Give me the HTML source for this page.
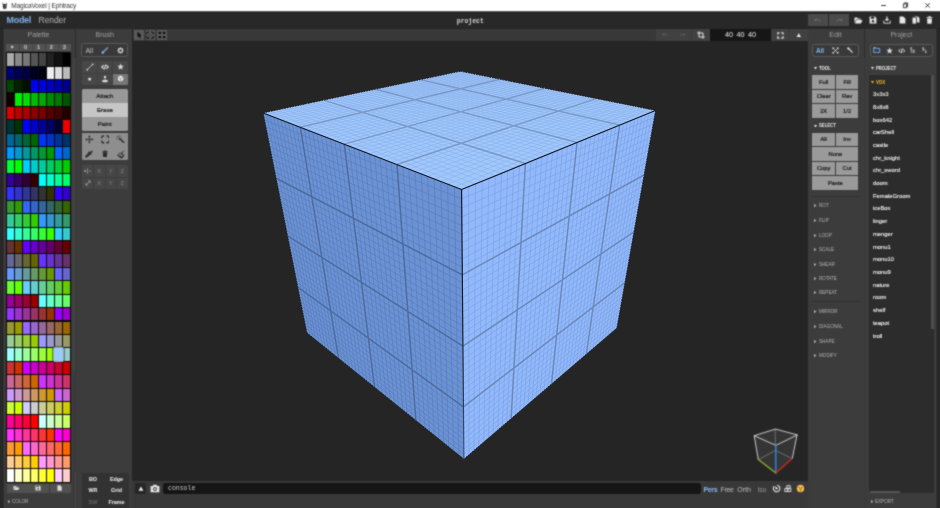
<!DOCTYPE html>
<html><head><meta charset="utf-8"><title>MagicaVoxel | Ephtracy</title>
<style>
*{box-sizing:border-box;margin:0;padding:0}
html,body{width:940px;height:508px;overflow:hidden;background:#282828}
body{position:relative;font-family:"Liberation Sans",sans-serif;font-size:7px;color:#ccc;line-height:1}
.a{position:absolute}
.t{position:absolute;white-space:nowrap;transform:translate(-50%,-50%)}
.l{position:absolute;white-space:nowrap;transform:translate(0,-50%)}
.panel{position:absolute;background:#3c3c3c}
.btn{position:absolute;background:#9a9a9a;color:#161616;-webkit-text-stroke:0.2px #161616;font-size:5.75px;text-align:center}
.btn span{position:absolute;left:50%;top:57%;transform:translate(-50%,-50%);white-space:nowrap}
.sec{position:absolute;margin-top:0.9px;font-size:5.6px;color:#c4c4c4;white-space:nowrap;transform:translate(0,-50%);display:flex;align-items:center;height:8px}
.sec i{font-style:normal;display:block;width:4.2px;height:3px}
.sec i.d{width:0;height:0;border-left:1.5px solid transparent;border-right:1.5px solid transparent;border-top:2.4px solid currentColor;margin-right:1.6px;margin-left:-0.4px;margin-top:-0.6px}
.sec i.r{width:0;height:0;border-top:1.5px solid transparent;border-bottom:1.5px solid transparent;border-left:2.5px solid currentColor;margin-right:1.7px;margin-top:-0.6px}
.sec b{display:block;font-weight:normal;transform:scaleX(0.82);transform-origin:left center}
.sec.o{color:#ececec}
.sec.o b{font-weight:bold;transform:scaleX(0.76)}
.item{position:absolute;left:873px;font-size:5.85px;color:#f4f4f4;-webkit-text-stroke:0.1px #f4f4f4;margin-top:0.9px;white-space:nowrap;transform:translate(0,-50%)}
.mono{font-family:"Liberation Mono",monospace}
#w{position:absolute;left:0;top:0;width:940px;height:508px;overflow:hidden;will-change:transform;filter:url(#cv)}
</style></head><body><svg width="0" height="0" style="position:absolute"><filter id="cv" x="0" y="0" width="100%" height="100%" color-interpolation-filters="sRGB"><feConvolveMatrix order="3" kernelMatrix="1 2 1 2 8 2 1 2 1" divisor="20" edgeMode="duplicate" preserveAlpha="true"/></filter></svg><div id="w">
<!-- title bar -->
<div class="a" style="left:0;top:0;width:940px;height:11px;background:#fff"></div>
<svg class="a" style="left:2.2px;top:1.6px" width="5.4" height="7.4" viewBox="0 0 7 9"><path d="M0.6,0.3 L2,2.2 L5,2.2 L6.4,0.3 L6,4 L5.6,8.6 L1.4,8.6 L1,4 Z" fill="#2a2233"/><rect x="2" y="3.6" width="1" height="1.2" fill="#b58ad8"/><rect x="4" y="3.6" width="1" height="1.2" fill="#b58ad8"/><rect x="2.2" y="6" width="2.6" height="1.6" fill="#5b4a78"/></svg>
<div class="l" style="left:11.3px;top:6.3px;font-size:6.5px;color:#333;letter-spacing:-0.14px">MagicaVoxel | Ephtracy</div>
<svg class="a" style="left:878px;top:0" width="62" height="11" viewBox="0 0 62 11"><path d="M3.2,5.5 H8" stroke="#111" stroke-width="0.85" fill="none"/><path d="M25.4,3.9 H28.6 V7.7 H25.4 Z M26.4,3.9 V2.9 H29.6 V6.7 H28.6" stroke="#111" stroke-width="0.8" fill="none"/><path d="M47.4,3.2 L51.8,7.6 M51.8,3.2 L47.4,7.6" stroke="#111" stroke-width="0.85" fill="none"/></svg>

<!-- menu bar -->
<div class="a" style="left:0;top:11px;width:940px;height:1px;background:#5a5a5a;z-index:2"></div>
<div class="a" style="left:0;top:12px;width:940px;height:1px;background:#212121;z-index:2"></div>
<div class="a" style="left:0;top:11.2px;width:940px;height:17.8px;background:#282828"></div>
<div class="l" style="left:6.6px;top:20.3px;font-size:8.9px;font-weight:bold;color:#7fb2e8;letter-spacing:-0.25px">Model</div>
<div class="l" style="left:38.6px;top:20.3px;font-size:8.5px;color:#b4b4b4;letter-spacing:-0.1px">Render</div>
<div class="t mono" style="left:470.3px;top:21.5px;font-size:6.4px;color:#d8d8d8;font-weight:bold">project</div>

<!-- panels -->
<div class="panel" style="left:3px;top:29px;width:129px;height:479px;background:#3a3a3a"></div>
<div class="panel" style="left:3px;top:29px;width:71px;height:479px"></div>
<div class="a" style="left:75.2px;top:29.4px;width:0.8px;height:28.4px;background:#2f2f2f"></div>
<div class="a" style="left:73px;top:58px;width:2.4px;height:312.7px;background:#424242"></div>
<div class="panel" style="left:77px;top:29px;width:55px;height:479px"></div>
<div class="a" style="left:132px;top:28px;width:676px;height:453px;background:#252525"></div>
<div class="a" style="left:133px;top:29px;width:675px;height:12px;background:#383838"></div>
<div class="a" style="left:132px;top:481px;width:676px;height:27px;background:#383838"></div>
<div class="panel" style="left:808px;top:29px;width:128.8px;height:479px;background:#3a3a3a"></div>
<div class="panel" style="left:808px;top:29px;width:55.5px;height:479px"></div>
<div class="a" style="left:864px;top:29.4px;width:1px;height:28.6px;background:#2e2e2e"></div>
<div class="panel" style="left:866px;top:29px;width:70.8px;height:479px"></div>


<!-- palette panel -->
<div class="t" style="left:38.5px;top:34.1px;font-size:7px;color:#a0a0a0">Palette</div>
<div class="a" style="left:6.3px;top:43.8px;width:64.4px;height:7.4px;background:#525252"></div>
<div class="a" style="left:19px;top:43.8px;width:0.7px;height:7.4px;background:#444"></div>
<div class="a" style="left:32px;top:43.8px;width:0.7px;height:7.4px;background:#444"></div>
<div class="a" style="left:45px;top:43.8px;width:0.7px;height:7.4px;background:#444"></div>
<div class="a" style="left:58px;top:43.8px;width:0.7px;height:7.4px;background:#444"></div>
<div class="t" style="left:12.7px;top:47.6px;font-size:3.8px;color:#d0d0d0">&#9654;</div>
<div class="t" style="left:25.6px;top:47.6px;font-size:5.8px;color:#cfcfcf;font-weight:bold">0</div>
<div class="t" style="left:38.5px;top:47.6px;font-size:5.8px;color:#cfcfcf;font-weight:bold">1</div>
<div class="t" style="left:51.4px;top:47.6px;font-size:5.8px;color:#cfcfcf;font-weight:bold">2</div>
<div class="t" style="left:64.3px;top:47.6px;font-size:5.8px;color:#cfcfcf;font-weight:bold">3</div>
<div style="position:absolute;left:6.0px;top:52.1px;width:65.0px;height:430.44px;background:#0a0a0a;border-radius:1.5px"></div>
<div style="position:absolute;left:7.00px;top:469.12px;width:7.00px;height:12.42px;background:rgb(255,255,255)"></div>
<div style="position:absolute;left:15.00px;top:469.12px;width:7.00px;height:12.42px;background:rgb(255,255,204)"></div>
<div style="position:absolute;left:23.00px;top:469.12px;width:7.00px;height:12.42px;background:rgb(255,255,153)"></div>
<div style="position:absolute;left:31.00px;top:469.12px;width:7.00px;height:12.42px;background:rgb(255,255,102)"></div>
<div style="position:absolute;left:39.00px;top:469.12px;width:7.00px;height:12.42px;background:rgb(255,255,51)"></div>
<div style="position:absolute;left:47.00px;top:469.12px;width:7.00px;height:12.42px;background:rgb(255,255,0)"></div>
<div style="position:absolute;left:55.00px;top:469.12px;width:7.00px;height:12.42px;background:rgb(255,204,255)"></div>
<div style="position:absolute;left:63.00px;top:469.12px;width:7.00px;height:12.42px;background:rgb(255,204,204)"></div>
<div style="position:absolute;left:7.00px;top:455.70px;width:7.00px;height:12.42px;background:rgb(255,204,153)"></div>
<div style="position:absolute;left:15.00px;top:455.70px;width:7.00px;height:12.42px;background:rgb(255,204,102)"></div>
<div style="position:absolute;left:23.00px;top:455.70px;width:7.00px;height:12.42px;background:rgb(255,204,51)"></div>
<div style="position:absolute;left:31.00px;top:455.70px;width:7.00px;height:12.42px;background:rgb(255,204,0)"></div>
<div style="position:absolute;left:39.00px;top:455.70px;width:7.00px;height:12.42px;background:rgb(255,153,255)"></div>
<div style="position:absolute;left:47.00px;top:455.70px;width:7.00px;height:12.42px;background:rgb(255,153,204)"></div>
<div style="position:absolute;left:55.00px;top:455.70px;width:7.00px;height:12.42px;background:rgb(255,153,153)"></div>
<div style="position:absolute;left:63.00px;top:455.70px;width:7.00px;height:12.42px;background:rgb(255,153,102)"></div>
<div style="position:absolute;left:7.00px;top:442.28px;width:7.00px;height:12.42px;background:rgb(255,153,51)"></div>
<div style="position:absolute;left:15.00px;top:442.28px;width:7.00px;height:12.42px;background:rgb(255,153,0)"></div>
<div style="position:absolute;left:23.00px;top:442.28px;width:7.00px;height:12.42px;background:rgb(255,102,255)"></div>
<div style="position:absolute;left:31.00px;top:442.28px;width:7.00px;height:12.42px;background:rgb(255,102,204)"></div>
<div style="position:absolute;left:39.00px;top:442.28px;width:7.00px;height:12.42px;background:rgb(255,102,153)"></div>
<div style="position:absolute;left:47.00px;top:442.28px;width:7.00px;height:12.42px;background:rgb(255,102,102)"></div>
<div style="position:absolute;left:55.00px;top:442.28px;width:7.00px;height:12.42px;background:rgb(255,102,51)"></div>
<div style="position:absolute;left:63.00px;top:442.28px;width:7.00px;height:12.42px;background:rgb(255,102,0)"></div>
<div style="position:absolute;left:7.00px;top:428.86px;width:7.00px;height:12.42px;background:rgb(255,51,255)"></div>
<div style="position:absolute;left:15.00px;top:428.86px;width:7.00px;height:12.42px;background:rgb(255,51,204)"></div>
<div style="position:absolute;left:23.00px;top:428.86px;width:7.00px;height:12.42px;background:rgb(255,51,153)"></div>
<div style="position:absolute;left:31.00px;top:428.86px;width:7.00px;height:12.42px;background:rgb(255,51,102)"></div>
<div style="position:absolute;left:39.00px;top:428.86px;width:7.00px;height:12.42px;background:rgb(255,51,51)"></div>
<div style="position:absolute;left:47.00px;top:428.86px;width:7.00px;height:12.42px;background:rgb(255,51,0)"></div>
<div style="position:absolute;left:55.00px;top:428.86px;width:7.00px;height:12.42px;background:rgb(255,0,255)"></div>
<div style="position:absolute;left:63.00px;top:428.86px;width:7.00px;height:12.42px;background:rgb(255,0,204)"></div>
<div style="position:absolute;left:7.00px;top:415.44px;width:7.00px;height:12.42px;background:rgb(255,0,153)"></div>
<div style="position:absolute;left:15.00px;top:415.44px;width:7.00px;height:12.42px;background:rgb(255,0,102)"></div>
<div style="position:absolute;left:23.00px;top:415.44px;width:7.00px;height:12.42px;background:rgb(255,0,51)"></div>
<div style="position:absolute;left:31.00px;top:415.44px;width:7.00px;height:12.42px;background:rgb(255,0,0)"></div>
<div style="position:absolute;left:39.00px;top:415.44px;width:7.00px;height:12.42px;background:rgb(204,255,255)"></div>
<div style="position:absolute;left:47.00px;top:415.44px;width:7.00px;height:12.42px;background:rgb(204,255,204)"></div>
<div style="position:absolute;left:55.00px;top:415.44px;width:7.00px;height:12.42px;background:rgb(204,255,153)"></div>
<div style="position:absolute;left:63.00px;top:415.44px;width:7.00px;height:12.42px;background:rgb(204,255,102)"></div>
<div style="position:absolute;left:7.00px;top:402.02px;width:7.00px;height:12.42px;background:rgb(204,255,51)"></div>
<div style="position:absolute;left:15.00px;top:402.02px;width:7.00px;height:12.42px;background:rgb(204,255,0)"></div>
<div style="position:absolute;left:23.00px;top:402.02px;width:7.00px;height:12.42px;background:rgb(204,204,255)"></div>
<div style="position:absolute;left:31.00px;top:402.02px;width:7.00px;height:12.42px;background:rgb(204,204,204)"></div>
<div style="position:absolute;left:39.00px;top:402.02px;width:7.00px;height:12.42px;background:rgb(204,204,153)"></div>
<div style="position:absolute;left:47.00px;top:402.02px;width:7.00px;height:12.42px;background:rgb(204,204,102)"></div>
<div style="position:absolute;left:55.00px;top:402.02px;width:7.00px;height:12.42px;background:rgb(204,204,51)"></div>
<div style="position:absolute;left:63.00px;top:402.02px;width:7.00px;height:12.42px;background:rgb(204,204,0)"></div>
<div style="position:absolute;left:7.00px;top:388.60px;width:7.00px;height:12.42px;background:rgb(204,153,255)"></div>
<div style="position:absolute;left:15.00px;top:388.60px;width:7.00px;height:12.42px;background:rgb(204,153,204)"></div>
<div style="position:absolute;left:23.00px;top:388.60px;width:7.00px;height:12.42px;background:rgb(204,153,153)"></div>
<div style="position:absolute;left:31.00px;top:388.60px;width:7.00px;height:12.42px;background:rgb(204,153,102)"></div>
<div style="position:absolute;left:39.00px;top:388.60px;width:7.00px;height:12.42px;background:rgb(204,153,51)"></div>
<div style="position:absolute;left:47.00px;top:388.60px;width:7.00px;height:12.42px;background:rgb(204,153,0)"></div>
<div style="position:absolute;left:55.00px;top:388.60px;width:7.00px;height:12.42px;background:rgb(204,102,255)"></div>
<div style="position:absolute;left:63.00px;top:388.60px;width:7.00px;height:12.42px;background:rgb(204,102,204)"></div>
<div style="position:absolute;left:7.00px;top:375.18px;width:7.00px;height:12.42px;background:rgb(204,102,153)"></div>
<div style="position:absolute;left:15.00px;top:375.18px;width:7.00px;height:12.42px;background:rgb(204,102,102)"></div>
<div style="position:absolute;left:23.00px;top:375.18px;width:7.00px;height:12.42px;background:rgb(204,102,51)"></div>
<div style="position:absolute;left:31.00px;top:375.18px;width:7.00px;height:12.42px;background:rgb(204,102,0)"></div>
<div style="position:absolute;left:39.00px;top:375.18px;width:7.00px;height:12.42px;background:rgb(204,51,255)"></div>
<div style="position:absolute;left:47.00px;top:375.18px;width:7.00px;height:12.42px;background:rgb(204,51,204)"></div>
<div style="position:absolute;left:55.00px;top:375.18px;width:7.00px;height:12.42px;background:rgb(204,51,153)"></div>
<div style="position:absolute;left:63.00px;top:375.18px;width:7.00px;height:12.42px;background:rgb(204,51,102)"></div>
<div style="position:absolute;left:7.00px;top:361.76px;width:7.00px;height:12.42px;background:rgb(204,51,51)"></div>
<div style="position:absolute;left:15.00px;top:361.76px;width:7.00px;height:12.42px;background:rgb(204,51,0)"></div>
<div style="position:absolute;left:23.00px;top:361.76px;width:7.00px;height:12.42px;background:rgb(204,0,255)"></div>
<div style="position:absolute;left:31.00px;top:361.76px;width:7.00px;height:12.42px;background:rgb(204,0,204)"></div>
<div style="position:absolute;left:39.00px;top:361.76px;width:7.00px;height:12.42px;background:rgb(204,0,153)"></div>
<div style="position:absolute;left:47.00px;top:361.76px;width:7.00px;height:12.42px;background:rgb(204,0,102)"></div>
<div style="position:absolute;left:55.00px;top:361.76px;width:7.00px;height:12.42px;background:rgb(204,0,51)"></div>
<div style="position:absolute;left:63.00px;top:361.76px;width:7.00px;height:12.42px;background:rgb(204,0,0)"></div>
<div style="position:absolute;left:7.00px;top:348.34px;width:7.00px;height:12.42px;background:rgb(153,255,255)"></div>
<div style="position:absolute;left:15.00px;top:348.34px;width:7.00px;height:12.42px;background:rgb(153,255,204)"></div>
<div style="position:absolute;left:23.00px;top:348.34px;width:7.00px;height:12.42px;background:rgb(153,255,153)"></div>
<div style="position:absolute;left:31.00px;top:348.34px;width:7.00px;height:12.42px;background:rgb(153,255,102)"></div>
<div style="position:absolute;left:39.00px;top:348.34px;width:7.00px;height:12.42px;background:rgb(153,255,51)"></div>
<div style="position:absolute;left:47.00px;top:348.34px;width:7.00px;height:12.42px;background:rgb(153,255,0)"></div>
<div style="position:absolute;left:55.00px;top:348.34px;width:7.00px;height:12.42px;background:rgb(153,204,255)"></div>
<div style="position:absolute;left:63.00px;top:348.34px;width:7.00px;height:12.42px;background:rgb(153,204,204)"></div>
<div style="position:absolute;left:7.00px;top:334.92px;width:7.00px;height:12.42px;background:rgb(153,204,153)"></div>
<div style="position:absolute;left:15.00px;top:334.92px;width:7.00px;height:12.42px;background:rgb(153,204,102)"></div>
<div style="position:absolute;left:23.00px;top:334.92px;width:7.00px;height:12.42px;background:rgb(153,204,51)"></div>
<div style="position:absolute;left:31.00px;top:334.92px;width:7.00px;height:12.42px;background:rgb(153,204,0)"></div>
<div style="position:absolute;left:39.00px;top:334.92px;width:7.00px;height:12.42px;background:rgb(153,153,255)"></div>
<div style="position:absolute;left:47.00px;top:334.92px;width:7.00px;height:12.42px;background:rgb(153,153,204)"></div>
<div style="position:absolute;left:55.00px;top:334.92px;width:7.00px;height:12.42px;background:rgb(153,153,153)"></div>
<div style="position:absolute;left:63.00px;top:334.92px;width:7.00px;height:12.42px;background:rgb(153,153,102)"></div>
<div style="position:absolute;left:7.00px;top:321.50px;width:7.00px;height:12.42px;background:rgb(153,153,51)"></div>
<div style="position:absolute;left:15.00px;top:321.50px;width:7.00px;height:12.42px;background:rgb(153,153,0)"></div>
<div style="position:absolute;left:23.00px;top:321.50px;width:7.00px;height:12.42px;background:rgb(153,102,255)"></div>
<div style="position:absolute;left:31.00px;top:321.50px;width:7.00px;height:12.42px;background:rgb(153,102,204)"></div>
<div style="position:absolute;left:39.00px;top:321.50px;width:7.00px;height:12.42px;background:rgb(153,102,153)"></div>
<div style="position:absolute;left:47.00px;top:321.50px;width:7.00px;height:12.42px;background:rgb(153,102,102)"></div>
<div style="position:absolute;left:55.00px;top:321.50px;width:7.00px;height:12.42px;background:rgb(153,102,51)"></div>
<div style="position:absolute;left:63.00px;top:321.50px;width:7.00px;height:12.42px;background:rgb(153,102,0)"></div>
<div style="position:absolute;left:7.00px;top:308.08px;width:7.00px;height:12.42px;background:rgb(153,51,255)"></div>
<div style="position:absolute;left:15.00px;top:308.08px;width:7.00px;height:12.42px;background:rgb(153,51,204)"></div>
<div style="position:absolute;left:23.00px;top:308.08px;width:7.00px;height:12.42px;background:rgb(153,51,153)"></div>
<div style="position:absolute;left:31.00px;top:308.08px;width:7.00px;height:12.42px;background:rgb(153,51,102)"></div>
<div style="position:absolute;left:39.00px;top:308.08px;width:7.00px;height:12.42px;background:rgb(153,51,51)"></div>
<div style="position:absolute;left:47.00px;top:308.08px;width:7.00px;height:12.42px;background:rgb(153,51,0)"></div>
<div style="position:absolute;left:55.00px;top:308.08px;width:7.00px;height:12.42px;background:rgb(153,0,255)"></div>
<div style="position:absolute;left:63.00px;top:308.08px;width:7.00px;height:12.42px;background:rgb(153,0,204)"></div>
<div style="position:absolute;left:7.00px;top:294.66px;width:7.00px;height:12.42px;background:rgb(153,0,153)"></div>
<div style="position:absolute;left:15.00px;top:294.66px;width:7.00px;height:12.42px;background:rgb(153,0,102)"></div>
<div style="position:absolute;left:23.00px;top:294.66px;width:7.00px;height:12.42px;background:rgb(153,0,51)"></div>
<div style="position:absolute;left:31.00px;top:294.66px;width:7.00px;height:12.42px;background:rgb(153,0,0)"></div>
<div style="position:absolute;left:39.00px;top:294.66px;width:7.00px;height:12.42px;background:rgb(102,255,255)"></div>
<div style="position:absolute;left:47.00px;top:294.66px;width:7.00px;height:12.42px;background:rgb(102,255,204)"></div>
<div style="position:absolute;left:55.00px;top:294.66px;width:7.00px;height:12.42px;background:rgb(102,255,153)"></div>
<div style="position:absolute;left:63.00px;top:294.66px;width:7.00px;height:12.42px;background:rgb(102,255,102)"></div>
<div style="position:absolute;left:7.00px;top:281.24px;width:7.00px;height:12.42px;background:rgb(102,255,51)"></div>
<div style="position:absolute;left:15.00px;top:281.24px;width:7.00px;height:12.42px;background:rgb(102,255,0)"></div>
<div style="position:absolute;left:23.00px;top:281.24px;width:7.00px;height:12.42px;background:rgb(102,204,255)"></div>
<div style="position:absolute;left:31.00px;top:281.24px;width:7.00px;height:12.42px;background:rgb(102,204,204)"></div>
<div style="position:absolute;left:39.00px;top:281.24px;width:7.00px;height:12.42px;background:rgb(102,204,153)"></div>
<div style="position:absolute;left:47.00px;top:281.24px;width:7.00px;height:12.42px;background:rgb(102,204,102)"></div>
<div style="position:absolute;left:55.00px;top:281.24px;width:7.00px;height:12.42px;background:rgb(102,204,51)"></div>
<div style="position:absolute;left:63.00px;top:281.24px;width:7.00px;height:12.42px;background:rgb(102,204,0)"></div>
<div style="position:absolute;left:7.00px;top:267.82px;width:7.00px;height:12.42px;background:rgb(102,153,255)"></div>
<div style="position:absolute;left:15.00px;top:267.82px;width:7.00px;height:12.42px;background:rgb(102,153,204)"></div>
<div style="position:absolute;left:23.00px;top:267.82px;width:7.00px;height:12.42px;background:rgb(102,153,153)"></div>
<div style="position:absolute;left:31.00px;top:267.82px;width:7.00px;height:12.42px;background:rgb(102,153,102)"></div>
<div style="position:absolute;left:39.00px;top:267.82px;width:7.00px;height:12.42px;background:rgb(102,153,51)"></div>
<div style="position:absolute;left:47.00px;top:267.82px;width:7.00px;height:12.42px;background:rgb(102,153,0)"></div>
<div style="position:absolute;left:55.00px;top:267.82px;width:7.00px;height:12.42px;background:rgb(102,102,255)"></div>
<div style="position:absolute;left:63.00px;top:267.82px;width:7.00px;height:12.42px;background:rgb(102,102,204)"></div>
<div style="position:absolute;left:7.00px;top:254.40px;width:7.00px;height:12.42px;background:rgb(102,102,153)"></div>
<div style="position:absolute;left:15.00px;top:254.40px;width:7.00px;height:12.42px;background:rgb(102,102,102)"></div>
<div style="position:absolute;left:23.00px;top:254.40px;width:7.00px;height:12.42px;background:rgb(102,102,51)"></div>
<div style="position:absolute;left:31.00px;top:254.40px;width:7.00px;height:12.42px;background:rgb(102,102,0)"></div>
<div style="position:absolute;left:39.00px;top:254.40px;width:7.00px;height:12.42px;background:rgb(102,51,255)"></div>
<div style="position:absolute;left:47.00px;top:254.40px;width:7.00px;height:12.42px;background:rgb(102,51,204)"></div>
<div style="position:absolute;left:55.00px;top:254.40px;width:7.00px;height:12.42px;background:rgb(102,51,153)"></div>
<div style="position:absolute;left:63.00px;top:254.40px;width:7.00px;height:12.42px;background:rgb(102,51,102)"></div>
<div style="position:absolute;left:7.00px;top:240.98px;width:7.00px;height:12.42px;background:rgb(102,51,51)"></div>
<div style="position:absolute;left:15.00px;top:240.98px;width:7.00px;height:12.42px;background:rgb(102,51,0)"></div>
<div style="position:absolute;left:23.00px;top:240.98px;width:7.00px;height:12.42px;background:rgb(102,0,255)"></div>
<div style="position:absolute;left:31.00px;top:240.98px;width:7.00px;height:12.42px;background:rgb(102,0,204)"></div>
<div style="position:absolute;left:39.00px;top:240.98px;width:7.00px;height:12.42px;background:rgb(102,0,153)"></div>
<div style="position:absolute;left:47.00px;top:240.98px;width:7.00px;height:12.42px;background:rgb(102,0,102)"></div>
<div style="position:absolute;left:55.00px;top:240.98px;width:7.00px;height:12.42px;background:rgb(102,0,51)"></div>
<div style="position:absolute;left:63.00px;top:240.98px;width:7.00px;height:12.42px;background:rgb(102,0,0)"></div>
<div style="position:absolute;left:7.00px;top:227.56px;width:7.00px;height:12.42px;background:rgb(51,255,255)"></div>
<div style="position:absolute;left:15.00px;top:227.56px;width:7.00px;height:12.42px;background:rgb(51,255,204)"></div>
<div style="position:absolute;left:23.00px;top:227.56px;width:7.00px;height:12.42px;background:rgb(51,255,153)"></div>
<div style="position:absolute;left:31.00px;top:227.56px;width:7.00px;height:12.42px;background:rgb(51,255,102)"></div>
<div style="position:absolute;left:39.00px;top:227.56px;width:7.00px;height:12.42px;background:rgb(51,255,51)"></div>
<div style="position:absolute;left:47.00px;top:227.56px;width:7.00px;height:12.42px;background:rgb(51,255,0)"></div>
<div style="position:absolute;left:55.00px;top:227.56px;width:7.00px;height:12.42px;background:rgb(51,204,255)"></div>
<div style="position:absolute;left:63.00px;top:227.56px;width:7.00px;height:12.42px;background:rgb(51,204,204)"></div>
<div style="position:absolute;left:7.00px;top:214.14px;width:7.00px;height:12.42px;background:rgb(51,204,153)"></div>
<div style="position:absolute;left:15.00px;top:214.14px;width:7.00px;height:12.42px;background:rgb(51,204,102)"></div>
<div style="position:absolute;left:23.00px;top:214.14px;width:7.00px;height:12.42px;background:rgb(51,204,51)"></div>
<div style="position:absolute;left:31.00px;top:214.14px;width:7.00px;height:12.42px;background:rgb(51,204,0)"></div>
<div style="position:absolute;left:39.00px;top:214.14px;width:7.00px;height:12.42px;background:rgb(51,153,255)"></div>
<div style="position:absolute;left:47.00px;top:214.14px;width:7.00px;height:12.42px;background:rgb(51,153,204)"></div>
<div style="position:absolute;left:55.00px;top:214.14px;width:7.00px;height:12.42px;background:rgb(51,153,153)"></div>
<div style="position:absolute;left:63.00px;top:214.14px;width:7.00px;height:12.42px;background:rgb(51,153,102)"></div>
<div style="position:absolute;left:7.00px;top:200.72px;width:7.00px;height:12.42px;background:rgb(51,153,51)"></div>
<div style="position:absolute;left:15.00px;top:200.72px;width:7.00px;height:12.42px;background:rgb(51,153,0)"></div>
<div style="position:absolute;left:23.00px;top:200.72px;width:7.00px;height:12.42px;background:rgb(51,102,255)"></div>
<div style="position:absolute;left:31.00px;top:200.72px;width:7.00px;height:12.42px;background:rgb(51,102,204)"></div>
<div style="position:absolute;left:39.00px;top:200.72px;width:7.00px;height:12.42px;background:rgb(51,102,153)"></div>
<div style="position:absolute;left:47.00px;top:200.72px;width:7.00px;height:12.42px;background:rgb(51,102,102)"></div>
<div style="position:absolute;left:55.00px;top:200.72px;width:7.00px;height:12.42px;background:rgb(51,102,51)"></div>
<div style="position:absolute;left:63.00px;top:200.72px;width:7.00px;height:12.42px;background:rgb(51,102,0)"></div>
<div style="position:absolute;left:7.00px;top:187.30px;width:7.00px;height:12.42px;background:rgb(51,51,255)"></div>
<div style="position:absolute;left:15.00px;top:187.30px;width:7.00px;height:12.42px;background:rgb(51,51,204)"></div>
<div style="position:absolute;left:23.00px;top:187.30px;width:7.00px;height:12.42px;background:rgb(51,51,153)"></div>
<div style="position:absolute;left:31.00px;top:187.30px;width:7.00px;height:12.42px;background:rgb(51,51,102)"></div>
<div style="position:absolute;left:39.00px;top:187.30px;width:7.00px;height:12.42px;background:rgb(51,51,51)"></div>
<div style="position:absolute;left:47.00px;top:187.30px;width:7.00px;height:12.42px;background:rgb(51,51,0)"></div>
<div style="position:absolute;left:55.00px;top:187.30px;width:7.00px;height:12.42px;background:rgb(51,0,255)"></div>
<div style="position:absolute;left:63.00px;top:187.30px;width:7.00px;height:12.42px;background:rgb(51,0,204)"></div>
<div style="position:absolute;left:7.00px;top:173.88px;width:7.00px;height:12.42px;background:rgb(51,0,153)"></div>
<div style="position:absolute;left:15.00px;top:173.88px;width:7.00px;height:12.42px;background:rgb(51,0,102)"></div>
<div style="position:absolute;left:23.00px;top:173.88px;width:7.00px;height:12.42px;background:rgb(51,0,51)"></div>
<div style="position:absolute;left:31.00px;top:173.88px;width:7.00px;height:12.42px;background:rgb(51,0,0)"></div>
<div style="position:absolute;left:39.00px;top:173.88px;width:7.00px;height:12.42px;background:rgb(0,255,255)"></div>
<div style="position:absolute;left:47.00px;top:173.88px;width:7.00px;height:12.42px;background:rgb(0,255,204)"></div>
<div style="position:absolute;left:55.00px;top:173.88px;width:7.00px;height:12.42px;background:rgb(0,255,153)"></div>
<div style="position:absolute;left:63.00px;top:173.88px;width:7.00px;height:12.42px;background:rgb(0,255,102)"></div>
<div style="position:absolute;left:7.00px;top:160.46px;width:7.00px;height:12.42px;background:rgb(0,255,51)"></div>
<div style="position:absolute;left:15.00px;top:160.46px;width:7.00px;height:12.42px;background:rgb(0,255,0)"></div>
<div style="position:absolute;left:23.00px;top:160.46px;width:7.00px;height:12.42px;background:rgb(0,204,255)"></div>
<div style="position:absolute;left:31.00px;top:160.46px;width:7.00px;height:12.42px;background:rgb(0,204,204)"></div>
<div style="position:absolute;left:39.00px;top:160.46px;width:7.00px;height:12.42px;background:rgb(0,204,153)"></div>
<div style="position:absolute;left:47.00px;top:160.46px;width:7.00px;height:12.42px;background:rgb(0,204,102)"></div>
<div style="position:absolute;left:55.00px;top:160.46px;width:7.00px;height:12.42px;background:rgb(0,204,51)"></div>
<div style="position:absolute;left:63.00px;top:160.46px;width:7.00px;height:12.42px;background:rgb(0,204,0)"></div>
<div style="position:absolute;left:7.00px;top:147.04px;width:7.00px;height:12.42px;background:rgb(0,153,255)"></div>
<div style="position:absolute;left:15.00px;top:147.04px;width:7.00px;height:12.42px;background:rgb(0,153,204)"></div>
<div style="position:absolute;left:23.00px;top:147.04px;width:7.00px;height:12.42px;background:rgb(0,153,153)"></div>
<div style="position:absolute;left:31.00px;top:147.04px;width:7.00px;height:12.42px;background:rgb(0,153,102)"></div>
<div style="position:absolute;left:39.00px;top:147.04px;width:7.00px;height:12.42px;background:rgb(0,153,51)"></div>
<div style="position:absolute;left:47.00px;top:147.04px;width:7.00px;height:12.42px;background:rgb(0,153,0)"></div>
<div style="position:absolute;left:55.00px;top:147.04px;width:7.00px;height:12.42px;background:rgb(0,102,255)"></div>
<div style="position:absolute;left:63.00px;top:147.04px;width:7.00px;height:12.42px;background:rgb(0,102,204)"></div>
<div style="position:absolute;left:7.00px;top:133.62px;width:7.00px;height:12.42px;background:rgb(0,102,153)"></div>
<div style="position:absolute;left:15.00px;top:133.62px;width:7.00px;height:12.42px;background:rgb(0,102,102)"></div>
<div style="position:absolute;left:23.00px;top:133.62px;width:7.00px;height:12.42px;background:rgb(0,102,51)"></div>
<div style="position:absolute;left:31.00px;top:133.62px;width:7.00px;height:12.42px;background:rgb(0,102,0)"></div>
<div style="position:absolute;left:39.00px;top:133.62px;width:7.00px;height:12.42px;background:rgb(0,51,255)"></div>
<div style="position:absolute;left:47.00px;top:133.62px;width:7.00px;height:12.42px;background:rgb(0,51,204)"></div>
<div style="position:absolute;left:55.00px;top:133.62px;width:7.00px;height:12.42px;background:rgb(0,51,153)"></div>
<div style="position:absolute;left:63.00px;top:133.62px;width:7.00px;height:12.42px;background:rgb(0,51,102)"></div>
<div style="position:absolute;left:7.00px;top:120.20px;width:7.00px;height:12.42px;background:rgb(0,51,51)"></div>
<div style="position:absolute;left:15.00px;top:120.20px;width:7.00px;height:12.42px;background:rgb(0,51,0)"></div>
<div style="position:absolute;left:23.00px;top:120.20px;width:7.00px;height:12.42px;background:rgb(0,0,255)"></div>
<div style="position:absolute;left:31.00px;top:120.20px;width:7.00px;height:12.42px;background:rgb(0,0,204)"></div>
<div style="position:absolute;left:39.00px;top:120.20px;width:7.00px;height:12.42px;background:rgb(0,0,153)"></div>
<div style="position:absolute;left:47.00px;top:120.20px;width:7.00px;height:12.42px;background:rgb(0,0,102)"></div>
<div style="position:absolute;left:55.00px;top:120.20px;width:7.00px;height:12.42px;background:rgb(0,0,51)"></div>
<div style="position:absolute;left:63.00px;top:120.20px;width:7.00px;height:12.42px;background:rgb(238,0,0)"></div>
<div style="position:absolute;left:7.00px;top:106.78px;width:7.00px;height:12.42px;background:rgb(221,0,0)"></div>
<div style="position:absolute;left:15.00px;top:106.78px;width:7.00px;height:12.42px;background:rgb(187,0,0)"></div>
<div style="position:absolute;left:23.00px;top:106.78px;width:7.00px;height:12.42px;background:rgb(170,0,0)"></div>
<div style="position:absolute;left:31.00px;top:106.78px;width:7.00px;height:12.42px;background:rgb(136,0,0)"></div>
<div style="position:absolute;left:39.00px;top:106.78px;width:7.00px;height:12.42px;background:rgb(119,0,0)"></div>
<div style="position:absolute;left:47.00px;top:106.78px;width:7.00px;height:12.42px;background:rgb(85,0,0)"></div>
<div style="position:absolute;left:55.00px;top:106.78px;width:7.00px;height:12.42px;background:rgb(68,0,0)"></div>
<div style="position:absolute;left:63.00px;top:106.78px;width:7.00px;height:12.42px;background:rgb(34,0,0)"></div>
<div style="position:absolute;left:7.00px;top:93.36px;width:7.00px;height:12.42px;background:rgb(17,0,0)"></div>
<div style="position:absolute;left:15.00px;top:93.36px;width:7.00px;height:12.42px;background:rgb(0,238,0)"></div>
<div style="position:absolute;left:23.00px;top:93.36px;width:7.00px;height:12.42px;background:rgb(0,221,0)"></div>
<div style="position:absolute;left:31.00px;top:93.36px;width:7.00px;height:12.42px;background:rgb(0,187,0)"></div>
<div style="position:absolute;left:39.00px;top:93.36px;width:7.00px;height:12.42px;background:rgb(0,170,0)"></div>
<div style="position:absolute;left:47.00px;top:93.36px;width:7.00px;height:12.42px;background:rgb(0,136,0)"></div>
<div style="position:absolute;left:55.00px;top:93.36px;width:7.00px;height:12.42px;background:rgb(0,119,0)"></div>
<div style="position:absolute;left:63.00px;top:93.36px;width:7.00px;height:12.42px;background:rgb(0,85,0)"></div>
<div style="position:absolute;left:7.00px;top:79.94px;width:7.00px;height:12.42px;background:rgb(0,68,0)"></div>
<div style="position:absolute;left:15.00px;top:79.94px;width:7.00px;height:12.42px;background:rgb(0,34,0)"></div>
<div style="position:absolute;left:23.00px;top:79.94px;width:7.00px;height:12.42px;background:rgb(0,17,0)"></div>
<div style="position:absolute;left:31.00px;top:79.94px;width:7.00px;height:12.42px;background:rgb(0,0,238)"></div>
<div style="position:absolute;left:39.00px;top:79.94px;width:7.00px;height:12.42px;background:rgb(0,0,221)"></div>
<div style="position:absolute;left:47.00px;top:79.94px;width:7.00px;height:12.42px;background:rgb(0,0,187)"></div>
<div style="position:absolute;left:55.00px;top:79.94px;width:7.00px;height:12.42px;background:rgb(0,0,170)"></div>
<div style="position:absolute;left:63.00px;top:79.94px;width:7.00px;height:12.42px;background:rgb(0,0,136)"></div>
<div style="position:absolute;left:7.00px;top:66.52px;width:7.00px;height:12.42px;background:rgb(0,0,119)"></div>
<div style="position:absolute;left:15.00px;top:66.52px;width:7.00px;height:12.42px;background:rgb(0,0,85)"></div>
<div style="position:absolute;left:23.00px;top:66.52px;width:7.00px;height:12.42px;background:rgb(0,0,68)"></div>
<div style="position:absolute;left:31.00px;top:66.52px;width:7.00px;height:12.42px;background:rgb(0,0,34)"></div>
<div style="position:absolute;left:39.00px;top:66.52px;width:7.00px;height:12.42px;background:rgb(0,0,17)"></div>
<div style="position:absolute;left:47.00px;top:66.52px;width:7.00px;height:12.42px;background:rgb(238,238,238)"></div>
<div style="position:absolute;left:55.00px;top:66.52px;width:7.00px;height:12.42px;background:rgb(221,221,221)"></div>
<div style="position:absolute;left:63.00px;top:66.52px;width:7.00px;height:12.42px;background:rgb(187,187,187)"></div>
<div style="position:absolute;left:7.00px;top:53.10px;width:7.00px;height:12.42px;background:rgb(170,170,170)"></div>
<div style="position:absolute;left:15.00px;top:53.10px;width:7.00px;height:12.42px;background:rgb(136,136,136)"></div>
<div style="position:absolute;left:23.00px;top:53.10px;width:7.00px;height:12.42px;background:rgb(119,119,119)"></div>
<div style="position:absolute;left:31.00px;top:53.10px;width:7.00px;height:12.42px;background:rgb(85,85,85)"></div>
<div style="position:absolute;left:39.00px;top:53.10px;width:7.00px;height:12.42px;background:rgb(68,68,68)"></div>
<div style="position:absolute;left:47.00px;top:53.10px;width:7.00px;height:12.42px;background:rgb(34,34,34)"></div>
<div style="position:absolute;left:55.00px;top:53.10px;width:7.00px;height:12.42px;background:rgb(17,17,17)"></div>
<div style="position:absolute;left:63.00px;top:53.10px;width:7.00px;height:12.42px;background:rgb(0,0,0)"></div>
<div style="position:absolute;left:53.10px;top:346.64px;width:10.80px;height:15.82px;border:1.1px solid #a4a4a4;border-radius:2px;background:rgb(153,204,255);box-shadow:0 0 0 0.5px #222"></div>
<div class="a" style="left:6.5px;top:483.8px;width:21px;height:9.4px;background:#505050"></div>
<div class="a" style="left:28.4px;top:483.8px;width:20.8px;height:9.4px;background:#505050"></div>
<div class="a" style="left:50px;top:483.8px;width:20.6px;height:9.4px;background:#505050"></div>
<svg class="a" style="left:13.2px;top:485.4px" width="6.8" height="6" viewBox="0 0 8 7"><path d="M0.5,1 H3 L3.7,1.9 H6 V2.8 H2 L0.5,5.8 Z M2.3,3.3 H7.6 L6.2,6 H0.9 Z" fill="#ddd"/></svg>
<svg class="a" style="left:35.3px;top:485.3px" width="6" height="6" viewBox="0 0 7 7"><path d="M0.5,0.5 H5.3 L6.5,1.7 V6.5 H0.5 Z" fill="#ddd"/><rect x="1.7" y="0.5" width="2.8" height="1.9" fill="#4c4c4c"/><circle cx="3.5" cy="4.5" r="1.1" fill="#4c4c4c"/></svg>
<svg class="a" style="left:57.4px;top:485.3px" width="5.2" height="6.2" viewBox="0 0 6 7"><path d="M0.5,0.3 H3.6 L5.5,2.2 V6.7 H0.5 Z" fill="#ddd"/></svg>
<div class="sec" style="left:8px;top:501px;color:#b2b2b2"><svg width="2.5" height="3.2" viewBox="0 0 2.5 3.2" style="display:block;margin-left:-0.4px;margin-right:2.1px;margin-top:-0.5px;flex:none"><path d="M0,0 L2.5,1.6 L0,3.2Z" fill="currentColor"/></svg><b>COLOR</b></div>

<div class="a" style="left:75px;top:471.6px;width:1px;height:37px;background:#484848"></div>
<!-- brush panel -->
<div class="t" style="left:104.7px;top:34.1px;font-size:7px;color:#a0a0a0">Brush</div>
<div class="a" style="left:81.3px;top:43.3px;width:46.5px;height:13.5px;border:0.8px solid #595959;border-radius:2.5px;background:#393939"></div>
<div class="t" style="left:89.2px;top:50.8px;font-size:6.8px;color:#c0c0c0">All</div>
<svg class="a" style="left:101px;top:46.5px" width="8" height="8" viewBox="0 0 8 8"><path d="M1.7,5.6 L6.6,0.8" stroke="#7fb2e8" stroke-width="1.2" stroke-linecap="round"/><circle cx="1.9" cy="5.5" r="1.35" fill="#7fb2e8"/></svg>
<svg class="a" style="left:116.7px;top:47.1px" width="7" height="7" viewBox="0 0 8 8"><circle cx="4" cy="4" r="2.2" fill="none" stroke="#ddd" stroke-width="1.3"/><g stroke="#ddd" stroke-width="1.2"><path d="M4,0.5V1.6M4,6.4V7.5M0.5,4H1.6M6.4,4H7.5M1.5,1.5L2.3,2.3M5.7,5.7L6.5,6.5M1.5,6.5L2.3,5.7M5.7,2.3L6.5,1.5"/></g></svg>
<!-- brush type grid -->
<div class="a" style="left:82px;top:61px;width:46px;height:24px;background:#474747;border-radius:1.5px"></div>
<div class="a" style="left:112.6px;top:73.2px;width:15.4px;height:11.8px;background:#767676;border-radius:0 0 1.5px 0"></div>
<div class="a" style="left:97px;top:61px;width:0.8px;height:24px;background:#3f3f3f"></div>
<div class="a" style="left:111.9px;top:61px;width:0.8px;height:24px;background:#3f3f3f"></div>
<div class="a" style="left:82px;top:72.5px;width:46px;height:0.8px;background:#3f3f3f"></div>
<svg class="a" style="left:85.5px;top:63px" width="8" height="8" viewBox="0 0 8 8"><path d="M1.2,6.8 L6.8,1.2" stroke="#e2e2e2" stroke-width="0.75"/><circle cx="1.3" cy="6.7" r="0.85" fill="#e2e2e2"/><circle cx="6.7" cy="1.3" r="0.85" fill="#e2e2e2"/></svg>
<svg class="a" style="left:100.8px;top:63px" width="8" height="8" viewBox="0 0 8 8"><path d="M2.6,2.2 L0.8,4 L2.6,5.8 M5.4,2.2 L7.2,4 L5.4,5.8 M4.6,1.6 L3.4,6.4" stroke="#e6e6e6" stroke-width="1.1" fill="none"/></svg>
<svg class="a" style="left:116.6px;top:63.2px" width="7.2" height="7.2" viewBox="0 0 8 8"><path d="M4,0.5 L5,3 L7.7,3.1 L5.6,4.8 L6.3,7.4 L4,5.9 L1.7,7.4 L2.4,4.8 L0.3,3.1 L3,3 Z" fill="#ddd"/></svg>
<svg class="a" style="left:86px;top:75px" width="8" height="8" viewBox="0 0 8 8"><rect x="2.4" y="2.9" width="2.5" height="2.5" fill="#e8e8e8"/></svg>
<svg class="a" style="left:100.6px;top:75px" width="8" height="8" viewBox="0 0 8 8"><circle cx="4" cy="1.9" r="1.2" fill="#ddd"/><path d="M3.6,2.5 H4.4 V5.2 H3.6 Z M1,5.4 Q4,4 7,5.4 Q7,7.3 4,7.3 Q1,7.3 1,5.4 Z" fill="#ddd"/></svg>
<svg class="a" style="left:116.6px;top:75.4px" width="7.2" height="7.2" viewBox="0 0 8 8"><circle cx="4" cy="4" r="3.1" fill="#eee"/><path d="M4,4 V6.8 M4,4 L1.6,2.7 M4,4 L6.4,2.7" stroke="#757575" stroke-width="0.7"/></svg>
<!-- mode -->
<div class="btn" style="left:81.7px;top:88.8px;width:46.4px;height:14.3px;background:#989898;font-size:6.1px;border-radius:1.5px 1.5px 0 0"><span style="top:51%">Attach</span></div>
<div class="btn" style="left:81.7px;top:103.1px;width:46.4px;height:14.1px;background:#c6c6c6;font-size:6.1px"><span style="top:51%">Erase</span></div>
<div class="btn" style="left:81.7px;top:117.2px;width:46px;height:13.6px;background:#989898;font-size:6.1px;border-radius:0 0 1.5px 1.5px"><span style="top:51%">Paint</span></div>
<div class="a" style="left:81.7px;top:132.5px;width:46.4px;height:27.8px;background:#8e8e8e;border-radius:0 0 1.5px 1.5px"></div>
<!-- tools icons -->
<svg class="a" style="left:84.80px;top:135.00px" width="8.8" height="8.8" viewBox="0 0 10 10"><path d="M5,1.2 V8.8 M1.2,5 H8.8" stroke="#2a2a2a" stroke-width="0.95" fill="none"/><path d="M5,0.2 L3.6,2.3 H6.4 Z M5,9.8 L3.6,7.7 H6.4 Z M0.2,5 L2.3,3.6 V6.4 Z M9.8,5 L7.7,3.6 V6.4 Z" fill="#2a2a2a"/></svg>
<svg class="a" style="left:100.60px;top:135.10px" width="8.6" height="8.6" viewBox="0 0 10 10"><path d="M1,3.7 V2.5 Q1,1 2.5,1 H3.7 M6.3,1 H7.5 Q9,1 9,2.5 V3.7 M9,6.3 V7.5 Q9,9 7.5,9 H6.3 M3.7,9 H2.5 Q1,9 1,7.5 V6.3" stroke="#2a2a2a" stroke-width="1.55" fill="none"/></svg>
<svg class="a" style="left:115.80px;top:135.20px" width="9" height="8.6" viewBox="0 0 10 10"><path d="M3.4,3.6 L9.2,9" stroke="#2a2a2a" stroke-width="1.7" fill="none"/><path d="M2.9,0.3 V2 M0.4,3 H2 M5.2,0.9 L4.1,2 M0.9,5.2 L2,4.1 M0.8,0.9 L1.9,2 M5.4,3 H6.2 M3,5.4 V6.2" stroke="#2a2a2a" stroke-width="0.7" fill="none"/></svg>
<svg class="a" style="left:85.30px;top:149.70px" width="8" height="8" viewBox="0 0 10 10"><path d="M0.4,9.6 L0.9,7 L5,2.9 L7.1,5 L3,9.1 Z" fill="#2a2a2a"/><path d="M4.4,2.1 L7.9,5.6" stroke="#2a2a2a" stroke-width="1.6"/><path d="M6,2.8 L7.6,1.2 Q8.6,0.4 9.3,1.1 Q9.9,2 9,2.9 L7.3,4.3 Z" fill="#2a2a2a"/></svg>
<svg class="a" style="left:101.90px;top:149.60px" width="6" height="7.8" viewBox="0 0 8 10"><path d="M0.4,1.5 H7.6 V2.7 H0.4 Z M2.7,0.4 H5.3 V1.5 H2.7 Z M1.1,3.1 H6.9 L6.5,9.7 H1.5 Z" fill="#2a2a2a"/></svg>
<svg class="a" style="left:115.50px;top:149.60px" width="9.8" height="9.2" viewBox="0 0 10 10"><path d="M4.6,2.4 L9.2,6 L5.6,9.6 L0.8,5.8 Z" fill="#2a2a2a"/><path d="M4.7,3.4 L7.8,5.9 L5.6,7 L2.2,5.4 Z" fill="#8c8c8c"/><path d="M5,5.6 L8,0.8" stroke="#2a2a2a" stroke-width="1" fill="none"/></svg>
<!-- mirror/axis -->
<div class="a" style="left:81.7px;top:165.2px;width:46.4px;height:11.5px;background:#464646;border-radius:1.5px 1.5px 0 0"></div>
<div class="a" style="left:81.7px;top:177.5px;width:46.4px;height:11.5px;background:#464646;border-radius:0 0 1.5px 1.5px"></div>
<div class="a" style="left:93.3px;top:165.2px;width:0.6px;height:23.8px;background:#3e3e3e"></div>
<div class="a" style="left:104.8px;top:165.2px;width:0.6px;height:23.8px;background:#3e3e3e"></div>
<div class="a" style="left:116.3px;top:165.2px;width:0.6px;height:23.8px;background:#3e3e3e"></div>
<svg class="a" style="left:84px;top:168px" width="7" height="6" viewBox="0 0 7 6"><path d="M3.5,0.3 V5.7" stroke="#b8b8b8" stroke-width="0.6"/><path d="M0.5,1.6 L2.3,3 L0.5,4.4 Z" fill="#b8b8b8"/><path d="M6.5,1.8 L5.2,3 L6.5,4.2 Z" fill="#9a9a9a"/></svg>
<svg class="a" style="left:84.6px;top:180.4px" width="6" height="6" viewBox="0 0 6 6"><path d="M1.2,4.8 L4.8,1.2 M3,0.9 H5.1 V3 M0.9,3 V5.1 H3" stroke="#b0b0b0" stroke-width="0.7" fill="none"/></svg>
<div class="t" style="left:99.3px;top:171.5px;font-size:5.8px;color:#808080">X</div>
<div class="t" style="left:110.8px;top:171.5px;font-size:5.8px;color:#808080">Y</div>
<div class="t" style="left:122.3px;top:171.5px;font-size:5.8px;color:#808080">Z</div>
<div class="t" style="left:99.3px;top:183.8px;font-size:5.8px;color:#808080">X</div>
<div class="t" style="left:110.8px;top:183.8px;font-size:5.8px;color:#808080">Y</div>
<div class="t" style="left:122.3px;top:183.8px;font-size:5.8px;color:#808080">Z</div>
<!-- brush bottom -->
<div class="a" style="left:81.5px;top:473px;width:47px;height:35px;background:#323232;border-radius:2px 2px 0 0"></div>
<div class="t" style="left:93px;top:479.7px;font-size:5.4px;color:#f0f0f0;font-weight:bold">BO</div>
<div class="t" style="left:116.5px;top:479.7px;font-size:5.4px;color:#f0f0f0;font-weight:bold">Edge</div>
<div class="t" style="left:93px;top:491.2px;font-size:5.4px;color:#f0f0f0;font-weight:bold">WR</div>
<div class="t" style="left:116.5px;top:491.2px;font-size:5.4px;color:#f0f0f0;font-weight:bold">Grid</div>
<div class="t" style="left:93px;top:502.9px;font-size:5.5px;color:#777">SW</div>
<div class="t" style="left:116.5px;top:502.9px;font-size:5.4px;color:#f0f0f0;font-weight:bold">Frame</div>

<!-- viewport toolbar -->
<div class="a" style="left:134.3px;top:30px;width:9.4px;height:9.5px;background:#5a5a5a"></div>
<div class="a" style="left:145.8px;top:30px;width:9.4px;height:9.5px;background:#5a5a5a"></div>
<div class="a" style="left:157.2px;top:30px;width:9.4px;height:9.5px;background:#5a5a5a"></div>
<svg class="a" style="left:135.5px;top:30.8px" width="7" height="8" viewBox="0 0 7 8"><path d="M1.6,0.6 L1.6,6.6 L3,5.3 L4,7.5 L4.9,7.1 L3.9,4.9 L5.8,4.9 Z" fill="#0c0c0c"/></svg>
<svg class="a" style="left:146.3px;top:30.6px" width="8.4" height="8.4" viewBox="0 0 10 10"><path d="M1.2,3.9 V2.7 Q1.2,1.2 2.7,1.2 H3.9 M6.1,1.2 H7.3 Q8.8,1.2 8.8,2.7 V3.9 M8.8,6.1 V7.3 Q8.8,8.8 7.3,8.8 H6.1 M3.9,8.8 H2.7 Q1.2,8.8 1.2,7.3 V6.1" stroke="#0c0c0c" stroke-width="1.3" fill="none"/><circle cx="5" cy="5" r="2.1" fill="#4a4a4a"/></svg>
<svg class="a" style="left:157.9px;top:30.8px" width="8" height="8" viewBox="0 0 8 8"><path d="M0.7,0.7 H3.1 V3.1 H0.7 Z M4.9,0.7 H7.3 V3.1 H4.9 Z M0.7,4.9 H3.1 V7.3 H0.7 Z M4.9,4.9 H7.3 V7.3 H4.9 Z" fill="#0c0c0c"/></svg>
<!-- right side of toolbar -->
<div class="a" style="left:656px;top:29.4px;width:152px;height:11.4px;background:#414141"></div>
<div class="a" style="left:690.5px;top:29.4px;width:0.8px;height:11.4px;background:#383838"></div>
<div class="a" style="left:771px;top:29.4px;width:0.8px;height:11.4px;background:#383838"></div>
<div class="a" style="left:789.4px;top:29.4px;width:0.8px;height:11.4px;background:#383838"></div>
<svg class="a" style="left:661.6px;top:32.2px" width="6.8" height="6" viewBox="0 0 8 7"><path d="M1.2,3.4 Q3.6,0.8 6.8,4.6" stroke="#666" stroke-width="0.9" fill="none"/><path d="M0.6,1.4 L0.9,4.2 L3.4,3.6 Z" fill="#666"/></svg>
<svg class="a" style="left:678.6px;top:32.2px" width="6.8" height="6" viewBox="0 0 8 7"><path d="M6.8,3.4 Q4.4,0.8 1.2,4.6" stroke="#666" stroke-width="0.9" fill="none"/><path d="M7.4,1.4 L7.1,4.2 L4.6,3.6 Z" fill="#666"/></svg>
<svg class="a" style="left:696.5px;top:30.5px" width="8" height="8" viewBox="0 0 8 8"><path d="M2,0.3 V6 H7.7 M0.3,2 H6 V7.7" stroke="#e8e8e8" stroke-width="1" fill="none"/></svg>
<div class="a" style="left:710.3px;top:29.4px;width:60.5px;height:11.4px;background:#161616"></div>
<div class="t" style="left:740.5px;top:35.2px;font-size:7.2px;color:#f0f0f0;word-spacing:1.6px">40 40 40</div>
<svg class="a" style="left:776.8px;top:31.8px" width="6.8" height="6.8" viewBox="0 0 8 8"><path d="M0.9,3 V0.9 H3 M5,0.9 H7.1 V3 M7.1,5 V7.1 H5 M3,7.1 H0.9 V5" stroke="#e0e0e0" stroke-width="1.5" fill="none" stroke-linejoin="round"/></svg>
<svg class="a" style="left:795.9px;top:32.6px" width="5.6" height="4.8" viewBox="0 0 7 6"><path d="M3.5,0.4 L6.6,5.6 H0.4 Z" fill="#eee"/></svg>

<!-- bottom bar -->
<div class="a" style="left:134.5px;top:483px;width:11.6px;height:10.8px;background:#262626;border-radius:1.5px"></div>
<svg class="a" style="left:137.6px;top:485.8px" width="6" height="6" viewBox="0 0 6 6"><path d="M3,0.6 L5.4,4.8 H0.6 Z" fill="#eee"/></svg>
<svg class="a" style="left:149.5px;top:484px" width="10" height="9" viewBox="0 0 10 9"><path d="M0.6,2 H2.8 L3.6,0.8 H6.4 L7.2,2 H9.4 V8.2 H0.6 Z" fill="#e8e8e8"/><circle cx="5" cy="5" r="2" fill="#383838"/><circle cx="5" cy="5" r="1" fill="#e8e8e8"/></svg>
<div class="a" style="left:162.6px;top:483px;width:538px;height:10.8px;background:#151515;border-radius:2.5px"></div>
<div class="l mono" style="left:168px;top:489.1px;font-size:6.5px;color:#c8c8c8">console</div>
<div class="l" style="left:703.6px;top:488.9px;font-size:7px;color:#86b8ee;font-weight:bold;letter-spacing:-0.4px">Pers</div>
<div class="l" style="left:720.5px;top:488.9px;font-size:7px;color:#bcbcbc;letter-spacing:-0.3px">Free</div>
<div class="l" style="left:737.3px;top:488.9px;font-size:7px;color:#bcbcbc;letter-spacing:-0.02px">Orth</div>
<div class="l" style="left:757.6px;top:488.9px;font-size:7px;color:#949494;letter-spacing:-0.3px">Iso</div>
<svg class="a" style="left:771.7px;top:484.3px" width="9" height="9" viewBox="0 0 9 9"><path d="M2.1,2.3 A3.3,3.3 0 1 0 5.2,1.2" stroke="#ececec" stroke-width="1.1" fill="none"/><path d="M4.6,4.4 L2.6,2.2" stroke="#ececec" stroke-width="0.9"/><circle cx="4.6" cy="4.4" r="1.15" fill="#ececec"/></svg>
<svg class="a" style="left:784.4px;top:485px" width="7.6" height="7.4" viewBox="0 0 9 9"><path d="M3.4,0.9 H7.4 V4.2 H3.4 Z M0.9,4.2 H4.4 V8 H0.9 Z M4.4,4.2 H8.2 V8 H4.4 Z" stroke="#ececec" stroke-width="1.15" fill="none"/></svg>
<svg class="a" style="left:796px;top:484.3px" width="9" height="9" viewBox="0 0 9 9"><circle cx="4.5" cy="4.5" r="3.7" fill="#f2be4a"/><path d="M4.5,4.6 V7.6 M4.5,4.6 L1.9,3 M4.5,4.6 L7.1,3" stroke="#7a5a10" stroke-width="0.7"/></svg>

<!-- axis gizmo -->
<svg class="a" style="left:750px;top:425px" width="52" height="52" viewBox="750 425 52 52">
<polygon points="775.1,429.2 797,435.1 792.3,458.6 775.8,473.1 758.3,459.6 754.2,435.7" fill="rgba(255,255,255,0.075)"/>
<g fill="none" stroke-linecap="round">
<path d="M775.1,429.2 L775.4,450.5 L758.3,459.6 M775.4,450.5 L792.3,458.6" stroke="#8a8a8a" stroke-width="0.7"/>
<path d="M775.1,429.2 L754.2,435.7 L775.8,445.4 L797,435.1 Z M754.2,435.7 L758.3,459.6 M797,435.1 L792.3,458.6" stroke="#dcdcdc" stroke-width="0.9"/>
<path d="M775.8,445.4 L775.8,473.1" stroke="#2f86d8" stroke-width="1.5"/>
<path d="M775.8,473.1 L758.3,459.6" stroke="#8ab82c" stroke-width="1.3"/>
<path d="M775.8,473.1 L792.3,458.6" stroke="#d02828" stroke-width="1.3"/>
</g></svg>

<!-- top right icons -->
<div class="a" style="left:808.2px;top:14.4px;width:20.2px;height:11.2px;background:#4a4a4a"></div>
<div class="a" style="left:829px;top:14.4px;width:20.2px;height:11.2px;background:#4a4a4a"></div>
<svg class="a" style="left:814.3px;top:16.8px" width="8" height="7" viewBox="0 0 8 7"><path d="M1.2,3.4 Q3.6,0.8 6.8,4.6" stroke="#707070" stroke-width="0.9" fill="none"/><path d="M0.6,1.4 L0.9,4.2 L3.4,3.6 Z" fill="#707070"/></svg>
<svg class="a" style="left:835.2px;top:16.8px" width="8" height="7" viewBox="0 0 8 7"><path d="M6.8,3.4 Q4.4,0.8 1.2,4.6" stroke="#707070" stroke-width="0.9" fill="none"/><path d="M7.4,1.4 L7.1,4.2 L4.6,3.6 Z" fill="#707070"/></svg>
<svg class="a" style="left:853.6px;top:16.6px" width="9" height="7" viewBox="0 0 9 7"><path d="M0.5,0.6 H3.2 L4,1.6 H6.6 V2.6 H2.2 L0.5,6 Z M2.5,3.1 H8.5 L6.9,6.4 H0.9 Z" fill="#e8e8e8"/></svg>
<svg class="a" style="left:868.8px;top:16.4px" width="8" height="8" viewBox="0 0 8 8"><path d="M0.6,0.6 H6 L7.4,2 V7.4 H0.6 Z" fill="#e8e8e8"/><rect x="2" y="0.6" width="3.2" height="2.2" fill="#282828"/><circle cx="4" cy="5.2" r="1.2" fill="#282828"/></svg>
<svg class="a" style="left:882.8px;top:16.2px" width="8" height="8" viewBox="0 0 8 8"><path d="M3.4,0.4 H4.6 V3 H6.2 L4,5.2 L1.8,3 H3.4 Z" fill="#e8e8e8"/><path d="M0.8,4.6 V7.2 H7.2 V4.6" stroke="#e8e8e8" stroke-width="0.9" fill="none"/></svg>
<svg class="a" style="left:898.6px;top:16.2px" width="7" height="8" viewBox="0 0 7 8"><path d="M0.6,0.4 H4.2 L6.4,2.6 V7.6 H0.6 Z" fill="#e8e8e8"/></svg>
<svg class="a" style="left:912px;top:16.2px" width="8" height="8" viewBox="0 0 8 8"><path d="M0.5,1.6 H4 V7.6 H0.5 Z" fill="#e8e8e8"/><path d="M2.6,0.4 H5.8 L7.5,2.1 V6.4 H4.8 V0.9 H2.6 Z" fill="#e8e8e8"/></svg>
<svg class="a" style="left:926.2px;top:16.2px" width="7" height="8" viewBox="0 0 7 8"><path d="M0.5,1.2 H6.5 V2 H0.5 Z M2.4,0.3 H4.6 V1.2 H2.4 Z M1,2.5 H6 L5.6,7.7 H1.4 Z" fill="#e8e8e8"/></svg>

<!-- edit panel -->
<div class="t" style="left:835.3px;top:34.1px;font-size:7px;color:#a0a0a0">Edit</div>
<div class="a" style="left:811.6px;top:43.5px;width:47.2px;height:13px;border:0.8px solid #595959;border-radius:2.5px;background:#393939"></div>
<div class="t" style="left:820px;top:50.9px;font-size:6.6px;color:#7fb2e8;font-weight:bold;letter-spacing:-0.2px">All</div>
<svg class="a" style="left:831.6px;top:46.8px" width="7" height="7" viewBox="0 0 7 7"><path d="M1,1 L6,6 M6,1 L1,6" stroke="#e8e8e8" stroke-width="0.8"/><path d="M0.4,0.4 H2.6 L0.4,2.6 Z M6.6,0.4 V2.6 L4.4,0.4 Z M0.4,6.6 V4.4 L2.6,6.6 Z M6.6,6.6 H4.4 L6.6,4.4 Z" fill="#e8e8e8"/></svg>
<svg class="a" style="left:847.2px;top:47.4px" width="6" height="6" viewBox="0 0 7 7"><path d="M2.6,2.6 L6.2,6.2" stroke="#e8e8e8" stroke-width="1.3" stroke-linecap="round"/><path d="M0.6,1.6 Q0.4,0.4 1.8,0.5 L1.2,1.2 L1.8,1.8 L2.6,1.3 Q2.8,2.8 1.6,2.8 Q0.6,2.8 0.6,1.6 Z" fill="#e8e8e8" stroke="#e8e8e8" stroke-width="0.7"/></svg>
<div class="sec o" style="left:814.6px;top:68px"><svg width="3" height="2.6" viewBox="0 0 3 2.6" style="display:block;margin-left:-0.5px;margin-right:1.7px;margin-top:-0.3px;flex:none"><path d="M0,0 H3 L1.5,2.6Z" fill="currentColor"/></svg><b>TOOL</b></div>
<div class="btn" style="left:812.4px;top:75.2px;width:22.6px;height:13.6px"><span>Full</span></div>
<div class="btn" style="left:835.8px;top:75.2px;width:22.6px;height:13.6px"><span>Fill</span></div>
<div class="btn" style="left:812.4px;top:89.7px;width:22.6px;height:13.6px"><span>Clear</span></div>
<div class="btn" style="left:835.8px;top:89.7px;width:22.6px;height:13.6px"><span>Rev</span></div>
<div class="btn" style="left:812.4px;top:104.2px;width:22.6px;height:13.6px"><span>2X</span></div>
<div class="btn" style="left:835.8px;top:104.2px;width:22.6px;height:13.6px"><span>1/2</span></div>
<div class="sec o" style="left:814.6px;top:125.2px"><svg width="3" height="2.6" viewBox="0 0 3 2.6" style="display:block;margin-left:-0.5px;margin-right:1.7px;margin-top:-0.3px;flex:none"><path d="M0,0 H3 L1.5,2.6Z" fill="currentColor"/></svg><b>SELECT</b></div>
<div class="btn" style="left:812.4px;top:132.6px;width:22.6px;height:13.6px"><span>All</span></div>
<div class="btn" style="left:835.8px;top:132.6px;width:22.6px;height:13.6px"><span>Inv</span></div>
<div class="btn" style="left:812.4px;top:147px;width:46px;height:13.6px"><span>None</span></div>
<div class="btn" style="left:812.4px;top:161.5px;width:22.6px;height:13.6px"><span>Copy</span></div>
<div class="btn" style="left:835.8px;top:161.5px;width:22.6px;height:13.6px"><span>Cut</span></div>
<div class="btn" style="left:812.4px;top:176px;width:46px;height:13.6px"><span>Paste</span></div>
<div class="a" style="left:811px;top:195.7px;width:49px;height:0.8px;background:#323232"></div>
<div class="sec" style="left:814.6px;top:205.4px;color:#b2b2b2"><svg width="2.5" height="3.2" viewBox="0 0 2.5 3.2" style="display:block;margin-left:-0.4px;margin-right:2.1px;margin-top:-0.5px;flex:none"><path d="M0,0 L2.5,1.6 L0,3.2Z" fill="currentColor"/></svg><b>ROT</b></div>
<div class="sec" style="left:814.6px;top:220px;color:#b2b2b2"><svg width="2.5" height="3.2" viewBox="0 0 2.5 3.2" style="display:block;margin-left:-0.4px;margin-right:2.1px;margin-top:-0.5px;flex:none"><path d="M0,0 L2.5,1.6 L0,3.2Z" fill="currentColor"/></svg><b>FLIP</b></div>
<div class="sec" style="left:814.6px;top:235px;color:#b2b2b2"><svg width="2.5" height="3.2" viewBox="0 0 2.5 3.2" style="display:block;margin-left:-0.4px;margin-right:2.1px;margin-top:-0.5px;flex:none"><path d="M0,0 L2.5,1.6 L0,3.2Z" fill="currentColor"/></svg><b>LOOP</b></div>
<div class="sec" style="left:814.6px;top:249.4px;color:#b2b2b2"><svg width="2.5" height="3.2" viewBox="0 0 2.5 3.2" style="display:block;margin-left:-0.4px;margin-right:2.1px;margin-top:-0.5px;flex:none"><path d="M0,0 L2.5,1.6 L0,3.2Z" fill="currentColor"/></svg><b>SCALE</b></div>
<div class="sec" style="left:814.6px;top:263.6px;color:#b2b2b2"><svg width="2.5" height="3.2" viewBox="0 0 2.5 3.2" style="display:block;margin-left:-0.4px;margin-right:2.1px;margin-top:-0.5px;flex:none"><path d="M0,0 L2.5,1.6 L0,3.2Z" fill="currentColor"/></svg><b>SHEAR</b></div>
<div class="sec" style="left:814.6px;top:277.8px;color:#b2b2b2"><svg width="2.5" height="3.2" viewBox="0 0 2.5 3.2" style="display:block;margin-left:-0.4px;margin-right:2.1px;margin-top:-0.5px;flex:none"><path d="M0,0 L2.5,1.6 L0,3.2Z" fill="currentColor"/></svg><b>ROTATE</b></div>
<div class="sec" style="left:814.6px;top:292px;color:#b2b2b2"><svg width="2.5" height="3.2" viewBox="0 0 2.5 3.2" style="display:block;margin-left:-0.4px;margin-right:2.1px;margin-top:-0.5px;flex:none"><path d="M0,0 L2.5,1.6 L0,3.2Z" fill="currentColor"/></svg><b>REPEAT</b></div>
<div class="a" style="left:811px;top:301.4px;width:49px;height:0.8px;background:#323232"></div>
<div class="sec" style="left:814.6px;top:311.4px;color:#b2b2b2"><svg width="2.5" height="3.2" viewBox="0 0 2.5 3.2" style="display:block;margin-left:-0.4px;margin-right:2.1px;margin-top:-0.5px;flex:none"><path d="M0,0 L2.5,1.6 L0,3.2Z" fill="currentColor"/></svg><b>MIRROR</b></div>
<div class="sec" style="left:814.6px;top:326px;color:#b2b2b2"><svg width="2.5" height="3.2" viewBox="0 0 2.5 3.2" style="display:block;margin-left:-0.4px;margin-right:2.1px;margin-top:-0.5px;flex:none"><path d="M0,0 L2.5,1.6 L0,3.2Z" fill="currentColor"/></svg><b>DIAGONAL</b></div>
<div class="sec" style="left:814.6px;top:340.8px;color:#b2b2b2"><svg width="2.5" height="3.2" viewBox="0 0 2.5 3.2" style="display:block;margin-left:-0.4px;margin-right:2.1px;margin-top:-0.5px;flex:none"><path d="M0,0 L2.5,1.6 L0,3.2Z" fill="currentColor"/></svg><b>SHAPE</b></div>
<div class="sec" style="left:814.6px;top:355px;color:#b2b2b2"><svg width="2.5" height="3.2" viewBox="0 0 2.5 3.2" style="display:block;margin-left:-0.4px;margin-right:2.1px;margin-top:-0.5px;flex:none"><path d="M0,0 L2.5,1.6 L0,3.2Z" fill="currentColor"/></svg><b>MODIFY</b></div>

<!-- project panel -->
<div class="t" style="left:901.3px;top:34.1px;font-size:7px;color:#a0a0a0">Project</div>
<div class="a" style="left:870.4px;top:43.5px;width:62.2px;height:13px;border:0.8px solid #595959;border-radius:2.5px;background:#393939"></div>
<svg class="a" style="left:873.2px;top:47.2px" width="7.4" height="6.2" viewBox="0 0 8 7"><path d="M0.6,0.7 H3 L3.8,1.6 H7.4 V6.3 H0.6 Z" stroke="#7fb2e8" stroke-width="1" fill="#34404e"/><path d="M0.6,1.1 H3.4" stroke="#7fb2e8" stroke-width="1.2"/></svg>
<svg class="a" style="left:886px;top:46.9px" width="7.2" height="7.2" viewBox="0 0 8 8"><path d="M4,0.5 L5,3 L7.7,3.1 L5.6,4.8 L6.3,7.4 L4,5.9 L1.7,7.4 L2.4,4.8 L0.3,3.1 L3,3 Z" fill="#ddd"/></svg>
<svg class="a" style="left:897.8px;top:46.6px" width="7.6" height="7.6" viewBox="0 0 8 8"><path d="M2.6,2.2 L0.8,4 L2.6,5.8 M5.4,2.2 L7.2,4 L5.4,5.8 M4.6,1.6 L3.4,6.4" stroke="#e6e6e6" stroke-width="1.05" fill="none"/></svg>
<svg class="a" style="left:910.2px;top:47.2px" width="5.6" height="6.4" viewBox="0 0 7 8"><path d="M1.4,1 V7 M1.4,3 L4.6,4.4 M1.4,6.4 L4.6,6.4" stroke="#ddd" stroke-width="0.7" fill="none"/><circle cx="1.4" cy="1.2" r="0.9" fill="#ddd"/><circle cx="5" cy="4.4" r="0.9" fill="#ddd"/><circle cx="5" cy="6.6" r="0.9" fill="#ddd"/></svg>
<svg class="a" style="left:922.4px;top:47.2px" width="5.6" height="6.4" viewBox="0 0 7 8"><path d="M1.4,1 V4 M1.4,2.6 L4.8,4 V6.6" stroke="#ddd" stroke-width="0.7" fill="none"/><circle cx="1.4" cy="1.2" r="0.9" fill="#ddd"/><circle cx="1.4" cy="4.2" r="0.7" fill="#ddd"/><circle cx="4.8" cy="6.6" r="0.9" fill="#ddd"/></svg>
<div class="sec o" style="left:871.4px;top:68px"><svg width="3" height="2.6" viewBox="0 0 3 2.6" style="display:block;margin-left:-0.5px;margin-right:1.7px;margin-top:-0.3px;flex:none"><path d="M0,0 H3 L1.5,2.6Z" fill="currentColor"/></svg><b>PROJECT</b></div>
<div class="a" style="left:869.4px;top:75px;width:64.6px;height:417.5px;background:#2c2c2c"></div>
<div class="a" style="left:931.4px;top:75px;width:2.6px;height:253.6px;background:#4e4e4e"></div>
<div class="a" style="left:869.5px;top:490.6px;width:30px;height:2px;background:#555"></div>
<div class="sec o" style="left:871.6px;top:82px;color:#f5c22e;font-weight:bold"><svg width="3" height="2.6" viewBox="0 0 3 2.6" style="display:block;margin-left:-0.5px;margin-right:1.7px;margin-top:-0.3px;flex:none"><path d="M0,0 H3 L1.5,2.6Z" fill="currentColor"/></svg><b>VOX</b></div>
<div class="item" style="top:94.3px">3x3x3</div>
<div class="item" style="top:107px">8x8x8</div>
<div class="item" style="top:119.7px">box642</div>
<div class="item" style="top:132.4px">carShell</div>
<div class="item" style="top:145.1px">castle</div>
<div class="item" style="top:157.8px">chr_knight</div>
<div class="item" style="top:170.5px">chr_sword</div>
<div class="item" style="top:183.2px">doom</div>
<div class="item" style="top:195.9px">FemaleGroom</div>
<div class="item" style="top:208.6px">iceBox</div>
<div class="item" style="top:221.3px">linger</div>
<div class="item" style="top:234px">menger</div>
<div class="item" style="top:246.7px">monu1</div>
<div class="item" style="top:259.5px">monu10</div>
<div class="item" style="top:272.2px">monu9</div>
<div class="item" style="top:284.9px">nature</div>
<div class="item" style="top:297.6px">room</div>
<div class="item" style="top:310.3px">shelf</div>
<div class="item" style="top:323px">teapot</div>
<div class="item" style="top:335.7px">troll</div>
<div class="sec" style="left:871px;top:500.5px;color:#b2b2b2"><svg width="2.5" height="3.2" viewBox="0 0 2.5 3.2" style="display:block;margin-left:-0.4px;margin-right:2.1px;margin-top:-0.5px;flex:none"><path d="M0,0 L2.5,1.6 L0,3.2Z" fill="currentColor"/></svg><b>EXPORT</b></div>
</div>
<svg style="position:absolute;left:0;top:0" width="940" height="508" viewBox="0 0 940 508">
<polygon points="263.2,112.9 460.3,71.3 655.5,110.5 461.6,189.6" fill="#a0c8fd"/>
<path d="M269.68,111.53L468.67,186.72M266.64,114.23L464.05,72.05M276.06,110.19L475.57,183.90M270.13,115.58L467.85,72.82M282.34,108.86L482.31,181.15M273.68,116.95L471.70,73.59M288.52,107.56L488.90,178.46M277.28,118.35L475.59,74.37M294.60,106.27L495.34,175.83M280.95,119.76L479.52,75.16M300.59,105.01L501.64,173.26M284.67,121.20L483.51,75.96M306.48,103.76L507.81,170.75M288.46,122.66L487.54,76.77M312.29,102.54L513.83,168.29M292.31,124.15L491.63,77.59M318.00,101.33L519.73,165.89M296.22,125.67L495.76,78.42M329.18,98.97L531.16,161.22M304.25,128.77L504.19,80.11M334.64,97.82L536.69,158.97M308.37,130.36L508.48,80.98M340.02,96.69L542.11,156.75M312.55,131.98L512.83,81.85M345.33,95.57L547.43,154.59M316.82,133.63L517.23,82.73M350.55,94.46L552.63,152.47M321.15,135.30L521.69,83.63M355.70,93.38L557.73,150.38M325.57,137.01L526.21,84.54M360.78,92.30L562.73,148.35M330.06,138.75L530.78,85.45M365.78,91.25L567.63,146.35M334.64,140.52L535.42,86.39M370.72,90.21L572.44,144.39M339.30,142.32L540.12,87.33M380.38,88.17L581.78,140.58M348.88,146.02L549.71,89.25M385.11,87.17L586.31,138.72M353.81,147.93L554.60,90.24M389.78,86.19L590.77,136.91M358.83,149.87L559.55,91.23M394.38,85.21L595.14,135.12M363.94,151.85L564.58,92.24M398.92,84.26L599.43,133.37M369.16,153.86L569.67,93.26M403.39,83.31L603.64,131.66M374.48,155.92L574.84,94.30M407.81,82.38L607.78,129.97M379.90,158.02L580.08,95.35M412.17,81.46L611.84,128.31M385.43,160.15L585.39,96.42M416.47,80.55L615.83,126.68M391.07,162.34L590.77,97.50M424.91,78.77L623.61,123.51M402.71,166.83L601.78,99.71M429.05,77.90L627.40,121.96M408.71,169.15L607.40,100.84M433.13,77.03L631.12,120.45M414.83,171.52L613.11,101.99M437.16,76.18L634.78,118.95M421.09,173.94L618.90,103.15M441.14,75.34L638.38,117.49M427.48,176.41L624.77,104.33M445.07,74.52L641.92,116.04M434.01,178.93L630.73,105.53M448.95,73.70L645.40,114.62M440.68,181.51L636.79,106.74M452.78,72.89L648.82,113.23M447.50,184.15L642.93,107.98M456.56,72.09L652.19,111.85M454.47,186.84L649.17,109.23" stroke="#8bb0e8" stroke-width="0.6" fill="none"/>
<path d="M323.63,100.15L525.51,163.53M300.20,127.20L499.95,79.26M375.58,89.18L577.15,142.46M344.05,144.15L544.88,88.29M420.72,79.65L619.75,125.08M396.83,164.56L596.24,98.60" stroke="#7a99c8" stroke-width="1.5" fill="none"/>
<polygon points="263.2,112.9 461.6,189.6 463.9,459.0 306.9,332.8" fill="#6b92d3"/>
<path d="M266.65,114.23L309.89,335.20M264.58,119.83L461.68,198.86M270.16,115.59L312.91,337.63M265.93,126.66L461.76,207.95M273.72,116.97L315.97,340.09M267.27,133.40L461.83,216.86M277.34,118.37L319.07,342.58M268.60,140.06L461.91,225.60M281.02,119.79L322.20,345.10M269.90,146.63L461.98,234.19M284.75,121.23L325.38,347.66M271.19,153.11L462.05,242.62M288.55,122.70L328.60,350.24M272.46,159.52L462.12,250.89M292.41,124.19L331.86,352.86M273.72,165.84L462.19,259.01M296.34,125.71L335.16,355.51M274.96,172.08L462.26,266.99M304.38,128.82L341.89,360.93M277.39,184.32L462.39,282.53M308.51,130.42L345.32,363.68M278.59,190.33L462.46,290.10M312.71,132.04L348.80,366.48M279.77,196.27L462.52,297.54M316.98,133.69L352.32,369.31M280.93,202.13L462.58,304.85M321.33,135.37L355.89,372.18M282.08,207.92L462.65,312.03M325.75,137.08L359.51,375.09M283.22,213.64L462.71,319.10M330.25,138.82L363.18,378.04M284.34,219.30L462.76,326.04M334.83,140.59L366.90,381.03M285.45,224.88L462.82,332.87M339.50,142.40L370.67,384.06M286.55,230.40L462.88,339.59M349.08,146.10L378.37,390.25M288.70,241.24L462.99,352.71M354.01,148.01L382.30,393.41M289.76,246.57L463.05,359.11M359.03,149.95L386.29,396.61M290.81,251.83L463.10,365.41M364.15,151.93L390.33,399.86M291.84,257.03L463.15,371.61M369.36,153.94L394.43,403.16M292.87,262.18L463.21,377.71M374.68,156.00L398.59,406.51M293.88,267.26L463.26,383.72M380.10,158.09L402.82,409.90M294.87,272.29L463.31,389.63M385.63,160.23L407.10,413.34M295.86,277.26L463.36,395.46M391.26,162.41L411.45,416.84M296.84,282.17L463.41,401.19M402.88,166.90L420.34,423.98M298.76,291.84L463.50,412.41M408.87,169.21L424.89,427.64M299.70,296.59L463.55,417.89M414.98,171.58L429.50,431.35M300.64,301.29L463.60,423.30M421.22,173.99L434.19,435.12M301.56,305.94L463.64,428.62M427.59,176.45L438.95,438.94M302.48,310.54L463.69,433.87M434.10,178.97L443.78,442.83M303.38,315.09L463.73,439.04M440.75,181.54L448.69,446.78M304.27,319.59L463.77,444.14M447.55,184.17L453.68,450.79M305.16,324.04L463.82,449.16M454.50,186.85L458.75,454.86M306.03,328.44L463.86,454.11" stroke="#577bbb" stroke-width="0.6" fill="none"/>
<path d="M300.33,127.25L338.50,358.20M276.18,178.24L462.33,274.83M344.25,144.23L374.49,387.13M287.63,235.85L462.94,346.20M397.01,164.63L415.86,420.38M297.80,287.03L463.45,406.84" stroke="#4f6c9f" stroke-width="1.5" fill="none"/>
<polygon points="461.6,189.6 655.5,110.5 616.8,328.1 463.9,459.0" fill="#91b9fb"/>
<path d="M468.65,186.72L468.98,454.65M461.68,198.85L654.29,117.33M475.53,183.92L473.97,450.38M461.76,207.93L653.09,124.07M482.26,181.17L478.88,446.18M461.83,216.84L651.90,130.72M488.84,178.49L483.71,442.04M461.91,225.58L650.74,137.28M495.27,175.86L488.46,437.97M461.98,234.16L649.58,143.77M501.56,173.30L493.13,433.97M462.05,242.59L648.45,150.17M507.72,170.79L497.73,430.04M462.12,250.86L647.32,156.49M513.74,168.33L502.26,426.16M462.19,258.98L646.21,162.73M519.63,165.93L506.71,422.35M462.26,266.95L645.11,168.89M531.05,161.27L515.41,414.90M462.39,282.49L642.96,180.99M536.58,159.01L519.66,411.26M462.46,290.05L641.91,186.93M542.00,156.80L523.85,407.68M462.52,297.49L640.86,192.80M547.30,154.64L527.97,404.15M462.58,304.80L639.83,198.60M552.51,152.52L532.03,400.67M462.64,311.98L638.81,204.32M557.61,150.43L536.03,397.25M462.71,319.05L637.81,209.98M562.61,148.40L539.97,393.88M462.76,325.99L636.81,215.57M567.51,146.40L543.85,390.55M462.82,332.83L635.83,221.10M572.32,144.43L547.68,387.28M462.88,339.55L634.86,226.56M581.66,140.62L555.16,380.87M462.99,352.66L632.95,237.29M586.20,138.77L558.82,377.74M463.05,359.06L632.01,242.57M590.66,136.95L562.43,374.64M463.10,365.36L631.08,247.78M595.03,135.17L565.99,371.60M463.15,371.56L630.17,252.94M599.33,133.42L569.50,368.59M463.21,377.67L629.26,258.03M603.54,131.69L572.96,365.63M463.26,383.68L628.37,263.07M607.69,130.01L576.37,362.71M463.31,389.59L627.48,268.05M611.76,128.35L579.74,359.83M463.36,395.42L626.60,272.98M615.75,126.71L583.06,356.99M463.41,401.16L625.74,277.85M623.54,123.54L589.56,351.42M463.50,412.38L624.03,287.44M627.33,121.99L592.75,348.69M463.55,417.87L623.19,292.15M631.06,120.47L595.90,345.99M463.59,423.27L622.36,296.82M634.73,118.97L599.00,343.34M463.64,428.60L621.54,301.43M638.34,117.50L602.07,340.71M463.69,433.85L620.73,305.99M641.88,116.05L605.09,338.13M463.73,439.02L619.93,310.51M645.37,114.63L608.07,335.57M463.77,444.13L619.13,314.98M648.80,113.23L611.02,333.05M463.82,449.15L618.35,319.40M652.18,111.86L613.93,330.56M463.86,454.11L617.57,323.77" stroke="#7a9fe0" stroke-width="0.6" fill="none"/>
<path d="M525.40,163.57L511.10,418.59M462.33,274.79L644.03,174.98M577.03,142.51L551.45,384.05M462.94,346.16L633.90,231.96M619.68,125.11L586.33,354.18M463.45,406.81L624.88,282.67" stroke="#6c89bc" stroke-width="1.5" fill="none"/>
<path d="M263.2,112.9L460.3,71.3M460.3,71.3L655.5,110.5M655.5,110.5L616.8,328.1M616.8,328.1L463.9,459.0M463.9,459.0L306.9,332.8M306.9,332.8L263.2,112.9" stroke="#17130f" stroke-width="0.7" fill="none" stroke-dasharray="1.6 1.1"/>
<defs><linearGradient id="eg" gradientUnits="userSpaceOnUse" x1="0" y1="189.6" x2="0" y2="459.0"><stop offset="0" stop-color="#10151f"/><stop offset="0.55" stop-color="#141b29"/><stop offset="1" stop-color="#3f5884"/></linearGradient></defs>
<path d="M263.2,112.9L461.6,189.6M461.6,189.6L655.5,110.5" stroke="#161c2a" stroke-width="1.1" stroke-linecap="round" fill="none"/>
<path d="M461.6,189.6L463.9,459.0" stroke="url(#eg)" stroke-width="1.15" stroke-linecap="round" fill="none"/>
</svg>
</body></html>
